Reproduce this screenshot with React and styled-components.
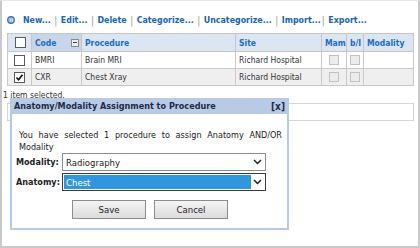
import React from 'react';
import styled, { createGlobalStyle } from 'styled-components';

const Global = createGlobalStyle`
  body {
    margin: 0;
    background: #fff;
    font-family: "DejaVu Sans Condensed", "Liberation Sans", sans-serif;
  }
`;

const Frame = styled.div`
  position: relative;
  width: 420px;
  height: 248px;
  box-sizing: border-box;
  border: 2px solid #c9c9c9;
  border-top: 1px solid #e6e6e6;
  padding: 0 4px 0 5px;
  overflow: hidden;
`;

const Toolbar = styled.div`
  display: flex;
  align-items: center;
  height: 14px;
  margin-top: 12px;
  margin-bottom: 6px;
  font-size: 8.8px;
  font-weight: bold;
  color: #1565b8;
  white-space: nowrap;
`;

const Globe = styled.svg`
  flex: none;
  margin-right: 8px;
`;

const Link = styled.span`
  cursor: pointer;
`;

const Sep = styled.span`
  color: #999;
  font-weight: normal;
  font-size: 10px;
  margin: ${p => (p.$tight ? '0 3.5px 0 1px' : '0 3.5px')};
`;

const Grid = styled.table`
  width: 407px;
  border-collapse: collapse;
  table-layout: fixed;
  font-size: 8.5px;
  color: #333;
`;

const Th = styled.th`
  height: 17px;
  padding: 0 2px 0 3px;
  text-align: ${p => (p.$center ? 'center' : 'left')};
  background: ${p => (p.$sorted ? '#c8d6e8' : '#dce6f2')};
  color: #1b6cc4;
  font-weight: bold;
  border: 1px solid #c6c6c6;
  white-space: nowrap;
`;

const HeadInner = styled.div`
  display: flex;
  align-items: center;
  justify-content: space-between;
`;

const Td = styled.td`
  height: 16px;
  padding: 0 3px;
  border: 1px solid #c9c9c9;
  text-align: ${p => (p.$center ? 'center' : 'left')};
  white-space: nowrap;
`;

const Tr = styled.tr`
  background: ${p => (p.$alt ? '#efefef' : '#fff')};
`;

const Box = styled.span`
  display: inline-block;
  box-sizing: border-box;
  width: ${p => (p.$dim ? '10px' : '11px')};
  height: ${p => (p.$dim ? '10px' : '11px')};
  border: 1px solid ${p => (p.$dim ? '#c2c2c2' : '#5a5a5a')};
  background: ${p => (p.$dim ? '#ececec' : '#fff')};
  vertical-align: middle;
  position: relative;
`;

const Tick = styled.svg`
  position: absolute;
  left: 0;
  top: 0;
`;

const SortBtn = styled.span`
  flex: none;
  width: 8px;
  height: 8px;
  box-sizing: border-box;
  border: 1px solid #8a8a8a;
  background: #eee;
  display: flex;
  align-items: center;
  justify-content: center;
  &::after {
    content: '';
    width: 4px;
    height: 1px;
    background: #444;
  }
`;

const Status = styled.div`
  font-size: 8.5px;
  color: #333;
  height: 12px;
  line-height: 12px;
  margin: 3px 0 2px -4px;
`;

const Pager = styled.div`
  width: 407px;
  height: 18px;
  box-sizing: border-box;
  border: 1px solid #d4d4d4;
`;

const Dialog = styled.div`
  position: absolute;
  left: 8px;
  top: 97px;
  width: 279px;
  height: 132px;
  box-sizing: border-box;
  border: 2px solid #b6c9e6;
  border-top: none;
  background: #fff;
  font-size: 9px;
  color: #222;
`;

const TitleBar = styled.div`
  display: flex;
  justify-content: space-between;
  align-items: center;
  height: 16px;
  margin: 0 -2px;
  padding: 0 4px 0 4px;
  background: #b7cbe7;
  font-weight: bold;
  color: #1d2b45;
  font-size: 9px;
`;

const Close = styled.span`
  font-size: 10px;
`;

const Body = styled.div`
  padding: 15px 5px 0 4px;
`;

const Message = styled.p`
  margin: 0 0 0 3px;
  text-align: justify;
  line-height: 12px;
`;

const Field = styled.div`
  display: flex;
  align-items: center;
  margin-bottom: 2px;
`;

const Label = styled.span`
  width: 46px;
  font-weight: bold;
`;

const Select = styled.div`
  display: flex;
  align-items: center;
  box-sizing: border-box;
  width: 204px;
  height: 18px;
  padding: 1px;
  border: 1px solid ${p => (p.$focus ? '#3a3a3a' : '#8c8c8c')};
  background: #fff;
`;

const Value = styled.span`
  flex: 1;
  align-self: stretch;
  display: flex;
  align-items: center;
  padding-left: 2px;
  background: ${p => (p.$hl ? '#3296de' : 'transparent')};
  color: ${p => (p.$hl ? '#fff' : '#222')};
  font-size: 9.5px;
`;

const Caret = styled.svg`
  flex: none;
`;

const Buttons = styled.div`
  display: flex;
  gap: 8px;
  margin: 9px 0 0 56px;
`;

const Button = styled.button`
  width: 74px;
  height: 19px;
  padding: 0;
  border: 1px solid #8d8d8d;
  background: linear-gradient(#f4f4f4, #dcdcdc);
  font-family: inherit;
  font-size: 9.5px;
  color: #222;
`;

const Check = ({ checked, dim }) => (
  <Box $dim={dim}>
    {checked && (
      <Tick width="9" height="9" viewBox="0 0 9 9">
        <path d="M1.5 4.5 L3.6 6.8 L7.5 1.8" fill="none" stroke="#111" strokeWidth="1.7" />
      </Tick>
    )}
  </Box>
);

const SelectBox = ({ value, hl }) => (
  <Select $focus={hl}>
    <Value $hl={hl}>{value}</Value>
    <Caret width="13" height="10" viewBox="0 0 13 10">
      <path d="M3 3 L6.5 6.5 L10 3" fill="none" stroke="#222" strokeWidth="1.5" />
    </Caret>
  </Select>
);

const rows = [
  { code: 'BMRI', proc: 'Brain MRI', site: 'Richard Hospital' },
  { code: 'CXR', proc: 'Chest Xray', site: 'Richard Hospital', checked: true },
];

const links = ['New...', 'Edit...', 'Delete', 'Categorize...', 'Uncategorize...', 'Import...', 'Export...'];

export default function App() {
  return (
    <>
      <Global />
      <Frame>
        <Toolbar>
          <Globe width="8" height="8" viewBox="0 0 8 8">
            <circle cx="4" cy="4" r="3.9" fill="#3a66bd" />
            <circle cx="4" cy="4" r="2.8" fill="#8aaee6" />
            <path d="M2.6 2.4 Q4 4 3.2 5.8 M4.9 2 Q5.8 4 5.2 6" stroke="#fff" strokeWidth="0.8" fill="none" />
          </Globe>
          {links.map((l, i) => (
            <React.Fragment key={l}>
              {i > 0 && <Sep $tight={l === 'Export...'}>|</Sep>}
              <Link>{l}</Link>
            </React.Fragment>
          ))}
        </Toolbar>
        <Grid>
          <colgroup>
            <col style={{ width: 24 }} />
            <col style={{ width: 50 }} />
            <col style={{ width: 154 }} />
            <col style={{ width: 86 }} />
            <col style={{ width: 25 }} />
            <col style={{ width: 17 }} />
            <col />
          </colgroup>
          <thead>
            <tr>
              <Th $center><Check /></Th>
              <Th $sorted>
                <HeadInner>Code<SortBtn /></HeadInner>
              </Th>
              <Th>Procedure</Th>
              <Th>Site</Th>
              <Th $center>Mam</Th>
              <Th $center>b/I</Th>
              <Th>Modality</Th>
            </tr>
          </thead>
          <tbody>
            {rows.map((r, i) => (
              <Tr key={r.code} $alt={i % 2 === 1}>
                <Td $center><Check checked={r.checked} /></Td>
                <Td>{r.code}</Td>
                <Td>{r.proc}</Td>
                <Td>{r.site}</Td>
                <Td $center><Check dim /></Td>
                <Td $center><Check dim /></Td>
                <Td />
              </Tr>
            ))}
          </tbody>
        </Grid>
        <Status>1 item selected.</Status>
        <Pager />
        <Dialog>
          <TitleBar>
            <span>Anatomy/Modality Assignment to Procedure</span>
            <Close>[x]</Close>
          </TitleBar>
          <Body>
            <Message>You have selected 1 procedure to assign Anatomy AND/OR Modality</Message>
            <Field>
              <Label>Modality:</Label>
              <SelectBox value="Radiography" />
            </Field>
            <Field>
              <Label>Anatomy:</Label>
              <SelectBox value="Chest" hl />
            </Field>
            <Buttons>
              <Button>Save</Button>
              <Button>Cancel</Button>
            </Buttons>
          </Body>
        </Dialog>
      </Frame>
    </>
  );
}
